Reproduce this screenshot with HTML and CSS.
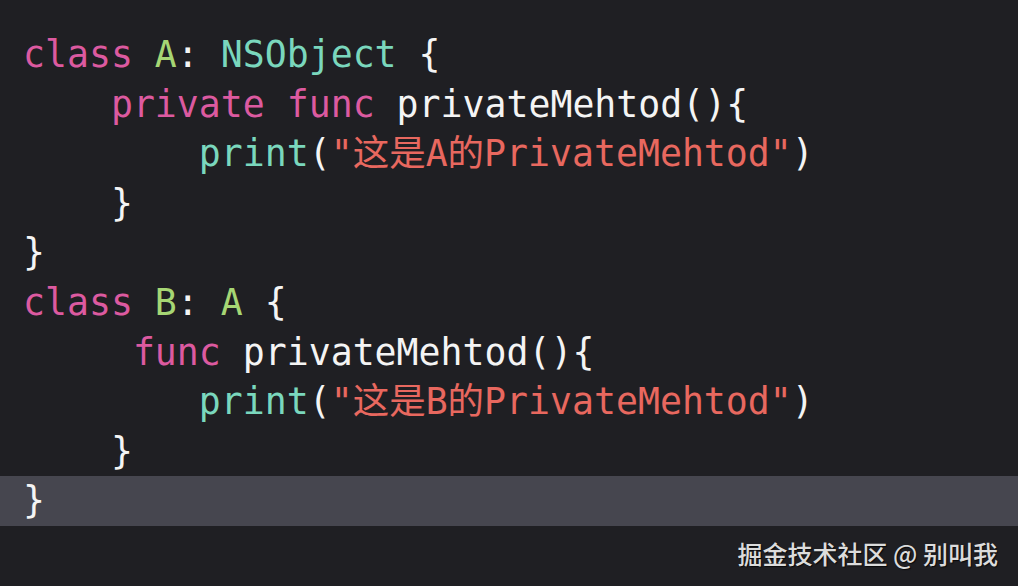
FILE: index.html
```html
<!DOCTYPE html>
<html lang="zh">
<head>
<meta charset="utf-8">
<link rel="stylesheet" href="styles.css">
</head>
<body>
<div class="editor">
  <div class="code">
    <div class="line"><span class="kw">class</span> <span class="decl">A</span>: <span class="type">NSObject</span> {</div>
    <div class="line">    <span class="kw">private</span> <span class="kw">func</span> privateMehtod(){</div>
    <div class="line">        <span class="type">print</span>(<span class="str">"这是A的PrivateMehtod"</span>)</div>
    <div class="line">    }</div>
    <div class="line">}</div>
    <div class="line"><span class="kw">class</span> <span class="decl">B</span>: <span class="decl">A</span> {</div>
    <div class="line">     <span class="kw">func</span> privateMehtod(){</div>
    <div class="line">        <span class="type">print</span>(<span class="str">"这是B的PrivateMehtod"</span>)</div>
    <div class="line">    }</div>
    <div class="line current">}</div>
  </div>
  <div class="footer"><span class="watermark">掘金技术社区 @ 别叫我</span></div>
</div>
</body>
</html>
```
FILE: styles.css
```css
html, body {
  margin: 0;
  padding: 0;
  background: #1f1f23;
}
.editor {
  width: 1018px;
  height: 586px;
  background: #1f1f23;
  overflow: hidden;
}
.code {
  padding-top: 30px;
  font-family: "DejaVu Sans Mono", "Noto Sans CJK SC", monospace;
  font-size: 36.5px;
  color: #f4f4f4;
}
.line {
  height: 49.6px;
  line-height: 49.6px;
  white-space: pre;
  padding-left: 23px;
  overflow: hidden;
}
.line.current {
  background: #46464f;
}
.kw { color: #dc5aa0; }
.decl { color: #a6d674; }
.type { color: #7ad7bd; }
.str { color: #e8685f; }
.footer {
  display: flex;
  justify-content: flex-end;
  padding: 12px 20px 0 0;
}
.watermark {
  font-family: "Noto Sans CJK SC", "Noto Sans", sans-serif;
  font-size: 25px;
  line-height: 30px;
  font-weight: 500;
  color: #dcdcdc;
  text-shadow: 1px 1px 1px rgba(0,0,0,0.7);
}
```
